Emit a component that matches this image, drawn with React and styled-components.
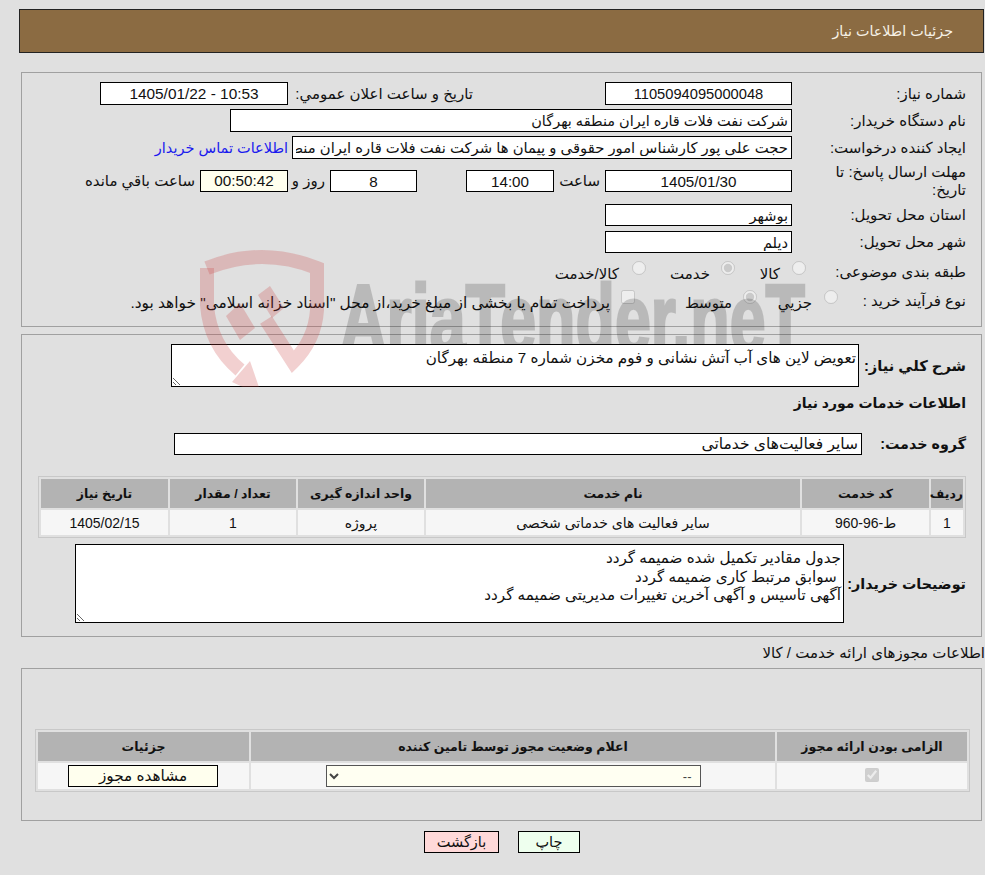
import React from 'react'
import styled, { createGlobalStyle } from 'styled-components'

const fontStack = '"Liberation Sans", "DejaVu Sans", sans-serif'

const GlobalStyle = createGlobalStyle`
    html, body {
        margin: 0;
        padding: 0;
        background: #e0e0e0;
    }
    body {
        font-family: ${fontStack};
        font-size: 15px;
        color: #111;
    }
`;

const Page = styled.div`
    position: relative;
    width: 985px;
    height: 875px;
    overflow: hidden;
    box-sizing: border-box;
    padding-top: 9px;
    direction: rtl;
`;

const Header = styled.div`
    height: 44px;
    box-sizing: border-box;
    margin: 0 1px 0 19px;
    padding-right: 30px;
    display: flex;
    align-items: center;
    background: #8b6b42;
    border: 1px solid #222;
    color: #f6f1e6;
    font-size: 14.3px;
`;

const Panel = styled.div`
    margin: ${p => p.$top}px 3px 0 21px;
    height: ${p => p.$height}px;
    box-sizing: border-box;
    padding-top: ${p => p.$pad}px;
    border: 1px solid #a0a0a0;
`;

const Row = styled.div`
    display: flex;
    align-items: center;
    height: ${p => p.$h || 22}px;
    margin-top: ${p => p.$mt || 0}px;
    padding-right: 15px;
`;

const Label = styled.div`
    width: ${p => p.$w}px;
    margin-right: ${p => p.$mr || 0}px;
    flex: none;
    box-sizing: border-box;
    padding-left: ${p => p.$pl || 0}px;
    line-height: 18px;
    font-weight: ${p => (p.$bold ? 700 : 400)};
    font-size: ${p => p.$fs || (p.$bold ? 14.3 : 15)}px;
    white-space: ${p => (p.$pl ? 'normal' : 'nowrap')};
`;

const Field = styled.input`
    flex: none;
    width: ${p => p.$w}px;
    height: ${p => p.$h || 22}px;
    margin-right: ${p => p.$mr || 0}px;
    box-sizing: border-box;
    padding: 0 3px;
    border: 1px solid #000;
    border-radius: 0;
    outline: none;
    background: ${p => p.$bg || '#fff'};
    color: #111;
    font-family: ${fontStack};
    font-size: ${p => p.$fs || 14.6}px;
    text-align: ${p => (p.$center ? 'center' : 'right')};
    direction: rtl;
`;

const Area = styled.textarea`
    display: block;
    flex: none;
    width: ${p => p.$w}px;
    height: ${p => p.$h}px;
    box-sizing: border-box;
    margin: 0;
    padding: 4px 2px 1px;
    border: 1px solid #000;
    border-radius: 0;
    outline: none;
    background: #fff;
    color: #111;
    font-family: ${fontStack};
    font-size: 15.2px;
    line-height: 18.5px;
    overflow: hidden;
    direction: rtl;
`;

const Unit = styled.span`
    flex: none;
    margin-right: ${p => p.$mr || 5}px;
    width: ${p => p.$w}px;
    white-space: nowrap;
`;

const ContactLink = styled.a`
    margin-right: 4px;
    color: #1a1aee;
    font-size: 14.5px;
    text-decoration: none;
    white-space: nowrap;
`;

const Choice = styled.label`
    flex: none;
    display: flex;
    align-items: flex-start;
    width: ${p => p.$w}px;
    white-space: nowrap;
`;

const ChoiceText = styled.span`
    margin-right: ${p => p.$mr}px;
    margin-top: 4px;
    font-size: ${p => p.$fs || 15}px;
`;

const Mark = styled.input`
    flex: none;
    width: 14px;
    height: 14px;
    margin: 0;
`;

const SectionTitle = styled.div`
    margin-top: 6px;
    padding-right: 15px;
    height: 20px;
    line-height: 20px;
    font-weight: 700;
    font-size: 14px;
`;

const Grid = styled.table`
    width: ${p => p.$w}px;
    box-sizing: border-box;
    border-collapse: separate;
    border-spacing: 2px;
    table-layout: fixed;
    border: 1px solid #c8c8c8;
    margin: ${p => p.$mt || 0}px ${p => p.$mr}px 0 0;
`;

const HeadCell = styled.th`
    width: ${p => p.$w}px;
    height: 29px;
    padding: 0;
    background: #b3b3b3;
    color: #111;
    font-size: 12.5px;
    font-weight: 700;
    text-align: center;
`;

const Cell = styled.td`
    height: ${p => p.$h || 25}px;
    padding: 0;
    background: #f6f6f6;
    font-size: 14px;
    text-align: center;
    vertical-align: middle;
`;

const Select = styled.select`
    display: block;
    width: 375px;
    height: 22px;
    margin: 0 auto;
    padding: 0 4px;
    border: 1px solid #555;
    border-radius: 0;
    background: #fffff2;
    color: #444;
    font-family: ${fontStack};
    font-size: 13px;
    direction: rtl;
`;

const PlainButton = styled.button`
    display: block;
    width: ${p => p.$w}px;
    height: 22px;
    margin: 0 ${p => p.$mr || 0}px 0 0;
    padding: 0;
    border: 1px solid #000;
    border-radius: 0;
    background: ${p => p.$bg};
    color: #111;
    font-family: ${fontStack};
    font-size: ${p => p.$fs || 14.5}px;
`;

const PermitTitle = styled.div`
    margin-top: 6px;
    height: 25px;
    line-height: 20px;
    font-size: 15px;
    white-space: nowrap;
`;

const Buttons = styled.div`
    display: flex;
    justify-content: center;
    gap: 19px;
    margin: 10px 0 0 19px;
`;

const Watermark = styled.svg`
    position: absolute;
    left: 190px;
    top: 245px;
    width: 640px;
    height: 142px;
    pointer-events: none;
`;

function BrandMark() {
    return (
        <Watermark viewBox="190 245 640 142">
            <defs>
                <clipPath id="greyPart">
                    <rect x="190" y="245" width="640" height="99" />
                </clipPath>
            </defs>
            <g fill="none" stroke="#c83c3c" strokeOpacity="0.24" strokeWidth="14">
                <path d="M207 268 Q262 246 317 268 L317 310 Q315 340 293 362 L266 320" />
                <path d="M207 268 L207 305 Q210 345 240 370" />
            </g>
            <g fill="#c83c3c" fillOpacity="0.24">
                <polygon points="250,361 232,382 262,396" />
                <polygon points="226,316 240,340 255,328 240,303" />
                <polygon points="258,295 270,286 284,308 272,318" />
            </g>
            <g clipPath="url(#greyPart)" opacity="0.17">
                <text
                    x="340"
                    y="352"
                    textLength="465"
                    lengthAdjust="spacingAndGlyphs"
                    direction="ltr"
                    fill="#000"
                    stroke="#000"
                    strokeWidth="3"
                    fontFamily="Liberation Sans, sans-serif"
                    fontWeight="700"
                    fontSize="96"
                >
                    AriaTender.neT
                </text>
            </g>
        </Watermark>
    )
}

function App() {
    return (
        <Page>
            <GlobalStyle />
            <Header>جزئیات اطلاعات نیاز</Header>

            <Panel $top={19} $height={255} $pad={9}>
                <Row $h={23}>
                    <Label $w={174}>شماره نیاز:</Label>
                    <Field $w={187} $h={23} $fs={14.7} $center readOnly value="1105094095000048" />
                    <Label $w={185} $mr={132}>تاریخ و ساعت اعلان عمومي:</Label>
                    <Field $w={188} $h={23} $fs={15.4} $center readOnly value="10:53 - 1405/01/22" />
                </Row>
                <Row $h={23} $mt={4}>
                    <Label $w={174}>نام دستگاه خریدار:</Label>
                    <Field $w={562} $h={23} $fs={14.5} readOnly value="شرکت نفت فلات قاره ایران منطقه بهرگان" />
                </Row>
                <Row $h={23} $mt={4}>
                    <Label $w={174}>ایجاد کننده درخواست:</Label>
                    <Field $w={500} $h={23} $fs={14.8} readOnly value="حجت علی پور کارشناس امور حقوقی و پیمان ها شرکت نفت فلات قاره ایران منطقه بهرگان" />
                    <ContactLink href="#">اطلاعات تماس خریدار</ContactLink>
                </Row>
                <Row $h={40} $mt={2}>
                    <Label $w={174} $pl={20}>مهلت ارسال پاسخ: تا تاریخ:</Label>
                    <Field $w={187} $fs={15.2} $center readOnly value="1405/01/30" />
                    <Unit $w={46}>ساعت</Unit>
                    <Field $w={88} $fs={15.2} $center readOnly value="14:00" />
                    <Field $w={87} $mr={49} $fs={15.2} $center readOnly value="8" />
                    <Unit $w={37}>روز و</Unit>
                    <Field $w={88} $bg="#ffffee" $fs={15.3} $center readOnly value="00:50:42" />
                    <Unit>ساعت باقي مانده</Unit>
                </Row>
                <Row $mt={3}>
                    <Label $w={174}>استان محل تحویل:</Label>
                    <Field $w={187} readOnly value="بوشهر" />
                </Row>
                <Row $mt={5}>
                    <Label $w={174}>شهر محل تحویل:</Label>
                    <Field $w={187} readOnly value="دیلم" />
                </Row>
                <Row $h={20} $mt={9}>
                    <Label $w={160}>طبقه بندی موضوعی:</Label>
                    <Choice $w={71}>
                        <Mark type="radio" name="kind" disabled />
                        <ChoiceText $mr={12}>کالا</ChoiceText>
                    </Choice>
                    <Choice $w={89}>
                        <Mark type="radio" name="kind" disabled defaultChecked />
                        <ChoiceText $mr={11}>خدمت</ChoiceText>
                    </Choice>
                    <Choice>
                        <Mark type="radio" name="kind" disabled />
                        <ChoiceText $mr={13}>کالا/خدمت</ChoiceText>
                    </Choice>
                </Row>
                <Row $h={20} $mt={9}>
                    <Label $w={128}>نوع فرآیند خرید :</Label>
                    <Choice $w={81}>
                        <Mark type="radio" name="process" disabled />
                        <ChoiceText $mr={12}>جزيي</ChoiceText>
                    </Choice>
                    <Choice $w={122}>
                        <Mark type="radio" name="process" disabled defaultChecked />
                        <ChoiceText $mr={11}>متوسط</ChoiceText>
                    </Choice>
                    <Choice>
                        <Mark type="checkbox" disabled />
                        <ChoiceText $mr={11} $fs={15.4}>پرداخت تمام یا بخشی از مبلغ خرید،از محل "اسناد خزانه اسلامی" خواهد بود.</ChoiceText>
                    </Choice>
                </Row>
            </Panel>

            <Panel $top={7} $height={303} $pad={9}>
                <Row $h={43}>
                    <Label $w={107} $bold $fs={14.7}>شرح کلي نياز:</Label>
                    <Area $w={688} $h={43} readOnly value="تعویض لاین های آب آتش نشانی و فوم مخزن شماره 7 منطقه بهرگان" />
                </Row>
                <SectionTitle>اطلاعات خدمات مورد نياز</SectionTitle>
                <Row $mt={20}>
                    <Label $w={104} $bold>گروه خدمت:</Label>
                    <Field $w={688} $fs={15.5} readOnly value="سایر فعالیت‌های خدماتی" />
                </Row>
                <Grid $w={928} $mt={21} $mr={15}>
                    <thead>
                        <tr>
                            <HeadCell $w={32}>ردیف</HeadCell>
                            <HeadCell $w={127}>کد خدمت</HeadCell>
                            <HeadCell $w={374}>نام خدمت</HeadCell>
                            <HeadCell $w={126}>واحد اندازه گیری</HeadCell>
                            <HeadCell $w={126}>تعداد / مقدار</HeadCell>
                            <HeadCell $w={127}>تاریخ نیاز</HeadCell>
                        </tr>
                    </thead>
                    <tbody>
                        <tr>
                            <Cell>1</Cell>
                            <Cell>ط-96-960</Cell>
                            <Cell>سایر فعالیت های خدماتی شخصی</Cell>
                            <Cell>پروژه</Cell>
                            <Cell>1</Cell>
                            <Cell>1405/02/15</Cell>
                        </tr>
                    </tbody>
                </Grid>
                <Row $h={79} $mt={6}>
                    <Label $w={122} $bold>توضیحات خریدار:</Label>
                    <Area
                        $w={769}
                        $h={79}
                        readOnly
                        value={'جدول مقادیر تکمیل شده ضمیمه گردد\n سوابق مرتبط کاری ضمیمه گردد\nآگهی تاسیس و آگهی آخرین تغییرات مدیریتی ضمیمه گردد'}
                    />
                </Row>
            </Panel>

            <PermitTitle>اطلاعات مجوزهای ارائه خدمت / کالا</PermitTitle>

            <Panel $top={0} $height={153} $pad={60}>
                <Grid $w={935} $mr={11}>
                    <thead>
                        <tr>
                            <HeadCell $w={190}>الزامی بودن ارائه مجوز</HeadCell>
                            <HeadCell $w={524}>اعلام وضعیت مجوز توسط تامین کننده</HeadCell>
                            <HeadCell $w={211}>جزئیات</HeadCell>
                        </tr>
                    </thead>
                    <tbody>
                        <tr>
                            <Cell $h={26}>
                                <Mark type="checkbox" disabled defaultChecked />
                            </Cell>
                            <Cell $h={26}>
                                <Select defaultValue="none">
                                    <option value="none">--</option>
                                </Select>
                            </Cell>
                            <Cell $h={26}>
                                <PlainButton $w={150} $mr={31} $bg="#ffffee" $fs={15.3}>مشاهده مجوز</PlainButton>
                            </Cell>
                        </tr>
                    </tbody>
                </Grid>
            </Panel>

            <Buttons>
                <PlainButton $w={62} $bg="#eeffee">چاپ</PlainButton>
                <PlainButton $w={75} $bg="#ffd9d9">بازگشت</PlainButton>
            </Buttons>

            <BrandMark />
        </Page>
    )
}

export default App
